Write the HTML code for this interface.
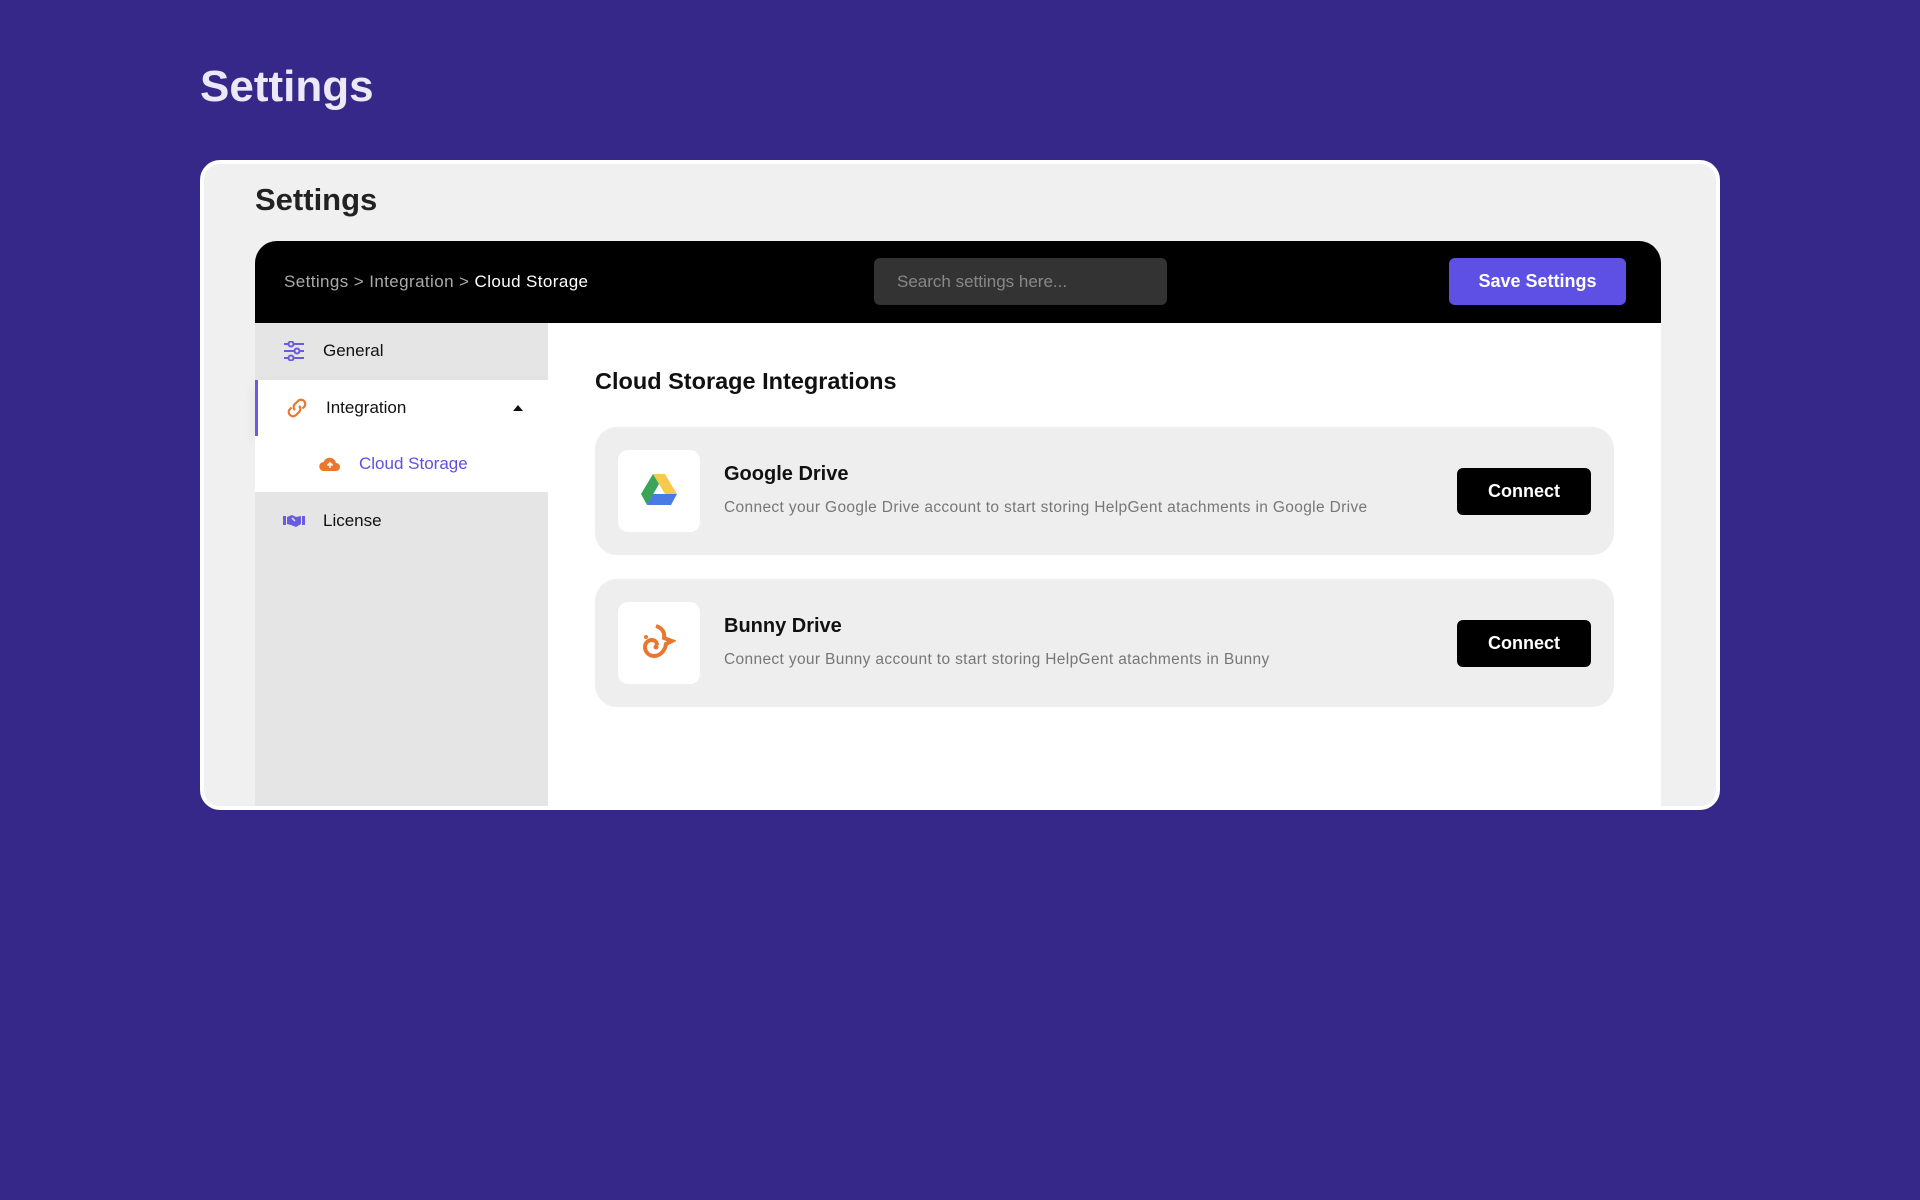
<!DOCTYPE html>
<html><head><meta charset="utf-8"><style>
*{box-sizing:border-box;margin:0;padding:0}
body{width:1920px;height:1200px;background:#352889;font-family:"Liberation Sans",sans-serif;position:relative;overflow:hidden}
.h1{position:absolute;left:200px;top:62px;font-size:44px;font-weight:bold;color:#ece8f7}
.card{position:absolute;left:200px;top:160px;width:1520px;height:650px;background:#f0f0f0;border:4px solid #fff;border-radius:20px;overflow:hidden}
.h2{position:absolute;left:51px;top:18px;font-size:31px;font-weight:bold;color:#222}
.bar{position:absolute;left:51px;top:77px;width:1406px;height:82px;background:#000;border-radius:22px 22px 0 0}
.crumb{position:absolute;left:29px;top:31px;font-size:17px;color:#aaa;letter-spacing:.4px}
.crumb b{color:#fff;font-weight:normal}
.search{position:absolute;left:619px;top:17px;width:293px;height:47px;background:#333;border-radius:6px;color:#888;font-size:17px;padding:14px 23px}
.save{position:absolute;left:1194px;top:17px;width:177px;height:47px;background:#5e50e4;border-radius:6px;color:#fff;font-size:18px;font-weight:bold;text-align:center;line-height:47px}
.side{position:absolute;left:51px;top:159px;width:293px;height:490px;background:#e5e5e5}
.row{position:absolute;left:0;width:293px;height:56px;font-size:17px;color:#111;line-height:56px;padding-left:68px}
.ic{position:absolute;left:28px;top:18px}
.main{position:absolute;left:344px;top:159px;width:1113px;height:490px;background:#fff}
.h3{position:absolute;left:47px;top:45px;font-size:23.5px;font-weight:bold;color:#111}
.it{position:absolute;left:47px;width:1019px;height:128px;background:#eee;border-radius:22px}
.logo{position:absolute;left:23px;top:23px;width:82px;height:82px;background:#fff;border-radius:10px}
.t{position:absolute;left:129px;top:36px;font-size:20px;font-weight:bold;color:#111}
.d{position:absolute;left:129px;top:72px;font-size:15.5px;color:#777;letter-spacing:.35px}
.btn{position:absolute;left:862px;top:41px;width:134px;height:47px;background:#000;color:#fff;border-radius:6px;font-size:18px;font-weight:bold;text-align:center;line-height:47px}
</style></head><body>
<div class="h1">Settings</div>
<div class="card">
<div class="h2">Settings</div>
<div class="bar">
<div class="crumb">Settings &gt; Integration &gt; <b>Cloud Storage</b></div>
<div class="search">Search settings here...</div>
<div class="save">Save Settings</div>
</div>
<div class="side">
<div class="row" style="top:0"><svg class="ic" width="22" height="20" viewBox="0 0 22 20" fill="none" stroke="#6a5ce0" stroke-width="2"><path d="M1 3h20M1 10h20M1 17h20"/><circle cx="8" cy="3" r="2.5" fill="#e5e5e5"/><circle cx="14" cy="10" r="2.5" fill="#e5e5e5"/><circle cx="8" cy="17" r="2.5" fill="#e5e5e5"/></svg>General</div>
<div class="row" style="top:57px;background:#fff;border-left:3px solid #6a5ce0;padding-left:68px;box-shadow:0 6px 14px rgba(0,0,0,.06)"><svg class="ic" style="left:28px" width="22" height="20" viewBox="0 0 22 20" fill="none" stroke="#e8782f" stroke-width="2.2"><path d="M9 12a4 4 0 0 1 0-6l3-3a4 4 0 0 1 6 6l-1.5 1.5"/><path d="M13 8a4 4 0 0 1 0 6l-3 3a4 4 0 0 1-6-6l1.5-1.5"/></svg>Integration<span style="position:absolute;left:255px;top:25px;border:5px solid transparent;border-bottom:6px solid #111;border-top:0"></span></div>
<div class="row" style="top:113px;background:#fff;padding-left:104px;color:#5e50e4"><svg class="ic" style="left:64px;top:19px" width="22" height="17" viewBox="0 0 22 17"><path d="M5 16a4.5 4.5 0 0 1-.5-9 6.5 6.5 0 0 1 12.5 1 4 4 0 0 1 0 8z" fill="#e8782f"/><path d="M11 13V8M8.5 10.5 11 8l2.5 2.5" stroke="#fff" stroke-width="1.6" fill="none"/></svg>Cloud Storage</div>
<div class="row" style="top:170px"><svg class="ic" style="top:21px" width="22" height="14" viewBox="0 0 22 14" fill="#6a5ce0"><rect x="0" y="2" width="3" height="9"/><rect x="19" y="2" width="3" height="9"/><path d="M4 3l5-2 4 2 5-1v8l-5 3-5-2-4-1z"/><path d="M9 4l3 3" stroke="#e5e5e5" stroke-width="1.5"/></svg>License</div>
</div>
<div class="main">
<div class="h3">Cloud Storage Integrations</div>
<div class="it" style="top:104px"><div class="logo"><svg style="position:absolute;left:23px;top:24px" width="36" height="32" viewBox="0 0 36 32"><path d="M12 0h12l12 20H24z" fill="#f7c94f"/><path d="M12 0 0 20l6 11L18 10z" fill="#3aa45b"/><path d="M6 31h24l6-11H12z" fill="#4a7ae3"/></svg></div>
<div class="t">Google Drive</div><div class="d">Connect your Google Drive account to start storing HelpGent atachments in Google Drive</div><div class="btn">Connect</div></div>
<div class="it" style="top:256px"><div class="logo"><svg style="position:absolute;left:24px;top:22px" width="34" height="38" viewBox="0 0 34 38"><path d="M14 2c6 2 9 6 8 12l8 3-6 3c-1 7-6 12-12 12-5 0-9-4-9-9 0-4 3-7 7-7 3 0 5 2 5 5" fill="none" stroke="#e8782f" stroke-width="4"/><circle cx="14" cy="23" r="2.5" fill="#e8782f"/><circle cx="4" cy="13" r="2" fill="#e8782f"/></svg></div>
<div class="t">Bunny Drive</div><div class="d">Connect your Bunny account to start storing HelpGent atachments in Bunny</div><div class="btn">Connect</div></div>
</div>
</div>
</body></html>
